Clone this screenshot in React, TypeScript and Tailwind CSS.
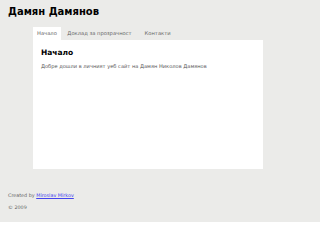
export default function App() {
  const tabs = ["Начало", "Доклад за прозрачност", "Контакти"];
  return (
    <div className="bg-white min-h-[246px] font-['DejaVu_Sans',sans-serif] text-[#333]">
      <div className="bg-[#ebebe9] h-[222px] pt-[6px]">
        {/* Header */}
        <h1 className="pl-2 text-[10px] leading-[12px] font-bold text-black">
          Дамян Дамянов
        </h1>

        {/* Tabs */}
        <div className="ml-[33px] mt-[9px] flex text-[5.2px] leading-[13px] text-[#666]">
          {tabs.map((t, i) => (
            <div
              key={t}
              className={i === 0 ? "bg-white px-[4px]" : "px-[6.5px]"}
            >
              {t}
            </div>
          ))}
        </div>

        {/* Content */}
        <div className="ml-[33px] w-[230px] h-[129px] bg-white px-2 pt-[8px]">
          <h2 className="text-[7.5px] leading-[10px] font-bold text-black">
            Начало
          </h2>
          <p className="mt-[4px] text-[5.1px] leading-[8px] text-[#555]">
            Добре дошли в личният уеб сайт на Дамян Николов Дамянов
          </p>
        </div>

        {/* Footer */}
        <div className="pl-2 mt-[22px] text-[4.85px] leading-[8px] text-[#666]">
          <p>
            Created by{" "}
            <a href="#" className="text-[#4444ee] underline">
              Miroslav Mirkov
            </a>
          </p>
          <p className="mt-[4px]">© 2009</p>
        </div>
      </div>
    </div>
  );
}
